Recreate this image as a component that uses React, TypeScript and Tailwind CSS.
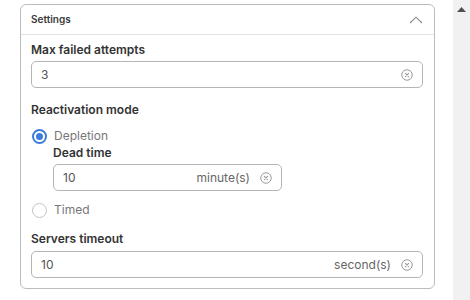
import React, { useState } from 'react';

function ClearIcon() {
  return (
    <svg width="12" height="12" viewBox="0 0 12 12" fill="none" className="shrink-0">
      <circle cx="6" cy="6" r="5.25" stroke="#9a9a9a" strokeWidth="1" />
      <path d="M4.4 4.4L7.6 7.6M7.6 4.4L4.4 7.6" stroke="#9a9a9a" strokeWidth="1.1" strokeLinecap="round" />
    </svg>
  );
}

function Field({ value, unit, className }: { value: string; unit?: string; className: string }) {
  return (
    <div className={`flex items-center h-[27px] border border-[#b5b5b5] rounded-[5px] pl-[9px] pr-[9px] bg-white ${className}`}>
      <span className="flex-1 text-[12px] text-[#555]">{value}</span>
      {unit && <span className="text-[12px] text-[#666] mr-[10px]">{unit}</span>}
      <ClearIcon />
    </div>
  );
}

function Radio({ checked, label, onClick }: { checked: boolean; label: string; onClick: () => void }) {
  return (
    <button onClick={onClick} className="flex items-center gap-[7px] h-[16px]">
      {checked ? (
        <span className="w-[15px] h-[15px] rounded-full border-[2px] border-[#3b7ddd] flex items-center justify-center">
          <span className="w-[7px] h-[7px] rounded-full bg-[#3b7ddd]" />
        </span>
      ) : (
        <span className="w-[15px] h-[15px] rounded-full border border-[#c4c4c4]" />
      )}
      <span className="text-[12px] text-[#777]">{label}</span>
    </button>
  );
}

export default function App() {
  const [mode, setMode] = useState('depletion');

  return (
    <div className="flex h-[300px] w-[470px] bg-white font-['Inter',sans-serif] overflow-hidden">
      <div className="flex-1 pl-[20px] pt-[4px]">
        <div className="w-[415px] border border-[#b9bcc0] rounded-[6px]">
          <div className="flex items-center justify-between h-[30px] pl-[10px] pr-[11px] border-b border-[#e1e3e6]">
            <span className="text-[10px] font-semibold text-[#3a3a3a]">Settings</span>
            <svg width="14" height="8" viewBox="0 0 14 8" fill="none">
              <path d="M1 7L7 1.2L13 7" stroke="#8a8a8a" strokeWidth="1.1" />
            </svg>
          </div>
          <div className="pl-[10px] pr-[11px] pt-[7px] pb-[10px]">
            <div className="text-[12px] font-semibold text-[#333] leading-[16px]">Max failed attempts</div>
            <Field value="3" className="mt-[3px]" />

            <div className="mt-[14px] text-[12px] font-semibold text-[#333] leading-[16px]">Reactivation mode</div>
            <div className="mt-[10px] pl-[1px]">
              <Radio checked={mode === 'depletion'} label="Depletion" onClick={() => setMode('depletion')} />
            </div>
            <div className="pl-[22px]">
              <div className="mt-[1px] text-[12px] font-semibold text-[#333] leading-[16px]">Dead time</div>
              <Field value="10" unit="minute(s)" className="mt-[3px] w-[229px]" />
            </div>
            <div className="mt-[11px] pl-[1px]">
              <Radio checked={mode === 'timed'} label="Timed" onClick={() => setMode('timed')} />
            </div>

            <div className="mt-[13px] text-[12px] font-semibold text-[#333] leading-[16px]">Servers timeout</div>
            <Field value="10" unit="second(s)" className="mt-[4px]" />
          </div>
        </div>
      </div>
      <div className="w-[17px] h-full bg-[#f1f1f1] flex justify-center pt-[7px]">
        <svg width="9" height="5" viewBox="0 0 9 5">
          <path d="M4.5 0L9 5H0Z" fill="#505050" />
        </svg>
      </div>
    </div>
  );
}
